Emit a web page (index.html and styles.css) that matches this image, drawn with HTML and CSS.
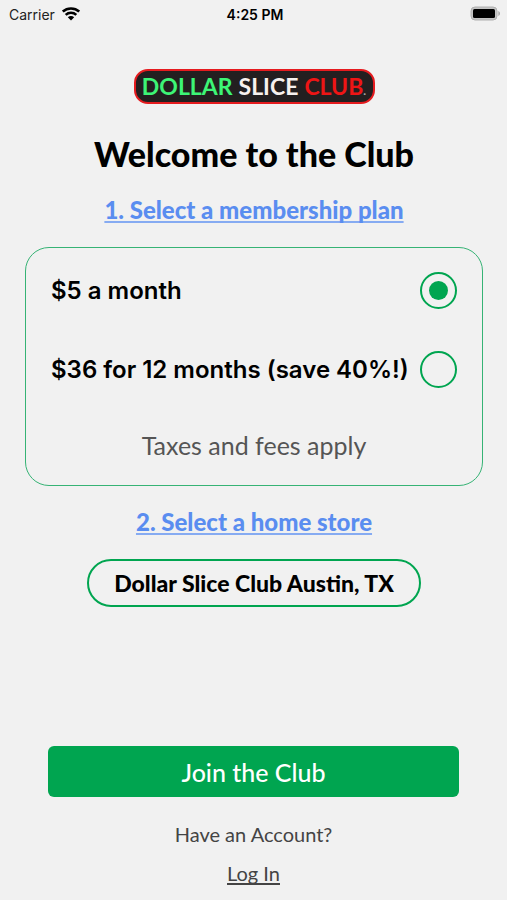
FILE: index.html
```html
<!DOCTYPE html>
<html lang="en">
<head>
    <meta charset="UTF-8">
    <meta name="viewport" content="width=device-width, initial-scale=1.0">
    <title>Dollar Slice Club</title>
    <link rel="stylesheet" href="styles.css">
</head>
<body>
    <header class="status-bar">
        <div class="carrier">
            <span>Carrier</span>
            <svg width="18" height="14" viewBox="0 0 18 14" fill="none" stroke="#000" stroke-width="2.6" aria-hidden="true">
                <path d="M.8 4.600C5.300.400 12.700.400 17.200 4.600"/>
                <path d="M3.700 7.900C6.700 5.100 11.300 5.100 14.300 7.900"/>
                <path d="M9 13.500L5.800 10.300C7.600 8.700 10.400 8.700 12.200 10.300Z" fill="#000" stroke="none"/>
            </svg>
        </div>
        <span class="time">4:25 PM</span>
        <svg class="battery" width="31" height="16" viewBox="0 0 31 16" aria-hidden="true">
            <rect x="1" y="1" width="26" height="13" rx="4" fill="#c4c4c4" stroke="#b0b0b0"/>
            <rect x="3" y="3" width="22" height="9" rx="1.500" fill="#000"/>
            <path d="M28.300 5C30.600 6 30.600 9 28.300 10Z" fill="#a9a9a9"/>
        </svg>
    </header>

    <main>
        <div class="logo">
            <span class="green">DOLLAR</span>
            <span class="white">SLICE</span>
            <span class="red">CLUB<small>.</small></span>
        </div>
        <h1>Welcome to the Club</h1>

        <h2><a href="#plans">1. Select a membership plan</a></h2>
        <form class="plans" id="plans">
            <label class="plan">
                <span>$5 a month</span>
                <input type="radio" name="plan" value="monthly" checked>
            </label>
            <label class="plan">
                <span>$36 for 12 months (save 40%!)</span>
                <input type="radio" name="plan" value="yearly">
            </label>
            <p class="taxes">Taxes and fees apply</p>
        </form>

        <h2><a href="#store">2. Select a home store</a></h2>
        <button class="store" id="store" type="button">Dollar Slice Club Austin, TX</button>
    </main>

    <footer>
        <button class="join" type="button">Join the Club</button>
        <p>Have an Account?</p>
        <a class="login" href="#login">Log In</a>
    </footer>
</body>
</html>
```
FILE: styles.css
```css
* {
    box-sizing: border-box;
}

body {
    --green: #00a550;
    margin: 0;
    min-height: 100vh;
    display: flex;
    flex-direction: column;
    background-color: #f1f1f1;
    color: #000;
    font-family: Lato, "Liberation Sans", sans-serif;
}

h1, h2, p {
    margin: 0;
}

button {
    font-family: inherit;
    cursor: pointer;
}

/* status bar */
.status-bar {
    display: grid;
    grid-template-columns: 1fr auto 1fr;
    align-items: center;
    height: 28px;
    padding: 0 6px 0 9px;
    font-family: Inter, sans-serif;
    font-size: 14px;
}

.carrier {
    display: flex;
    align-items: center;
    gap: 7px;
    color: #222;
}

.time {
    font-weight: 600;
}

.battery {
    justify-self: end;
}

main {
    display: flex;
    flex-direction: column;
    align-items: center;
    padding: 41px 24px 24px 25px;
}

.logo {
    display: flex;
    align-items: baseline;
    justify-content: center;
    gap: 6px;
    width: 241px;
    height: 35px;
    border: 2px solid #e51b1f;
    border-radius: 14px;
    background-color: #231f20;
    font-size: 23px;
    font-weight: 700;
    line-height: 31px;
}

.logo small {
    color: #aaa;
    font-size: 12px;
    line-height: 1;
}

.green {
    color: #3df576;
}

.white {
    color: #f7f1ee;
}

.red {
    color: #ee1515;
}

h1 {
    margin-top: 30px;
    font-size: 34px;
    font-weight: 900;
    line-height: 40px;
}

h2 {
    margin: 24px 0 25px;
    font-size: 24px;
    font-weight: 900;
    line-height: 24px;
}

h2 a {
    color: #5a8df0;
    text-decoration-color: #86abf2;
    text-decoration-thickness: 2px;
    text-underline-offset: 2px;
    text-decoration-skip-ink: none;
}

/* plan picker */
.plans {
    width: 100%;
    padding: 24px 25px;
    border: 1px solid #36b375;
    border-radius: 24px;
}

.plan {
    display: flex;
    align-items: center;
    justify-content: space-between;
    margin-bottom: 42px;
    font-family: Inter, sans-serif;
    font-size: 24px;
    font-weight: 600;
    line-height: 36px;
}

.plan input {
    appearance: none;
    flex: none;
    width: 37px;
    height: 37px;
    margin: 0;
    border: 2px solid var(--green);
    border-radius: 50%;
    cursor: pointer;
}

.plan input:checked {
    padding: 7px;
    background-color: var(--green);
    background-clip: content-box;
}

.taxes {
    color: #555;
    font-size: 25px;
    line-height: 31px;
    text-align: center;
}

.store {
    height: 48px;
    padding: 0 25px;
    border: 2px solid var(--green);
    border-radius: 24px;
    background: none;
    color: #000;
    font-size: 23px;
    font-weight: 900;
}

footer {
    display: flex;
    flex-direction: column;
    align-items: center;
    margin-top: auto;
    padding: 0 48px 15px;
    color: #444;
    font-size: 20px;
    line-height: 24px;
}

.join {
    width: 100%;
    height: 51px;
    margin-bottom: 25px;
    border: 0;
    border-radius: 6px;
    background-color: var(--green);
    color: #fff;
    font-size: 25px;
    font-weight: 500;
}

.login {
    margin-top: 15px;
    color: inherit;
    text-underline-offset: 2px;
    text-decoration-skip-ink: none;
}
```
